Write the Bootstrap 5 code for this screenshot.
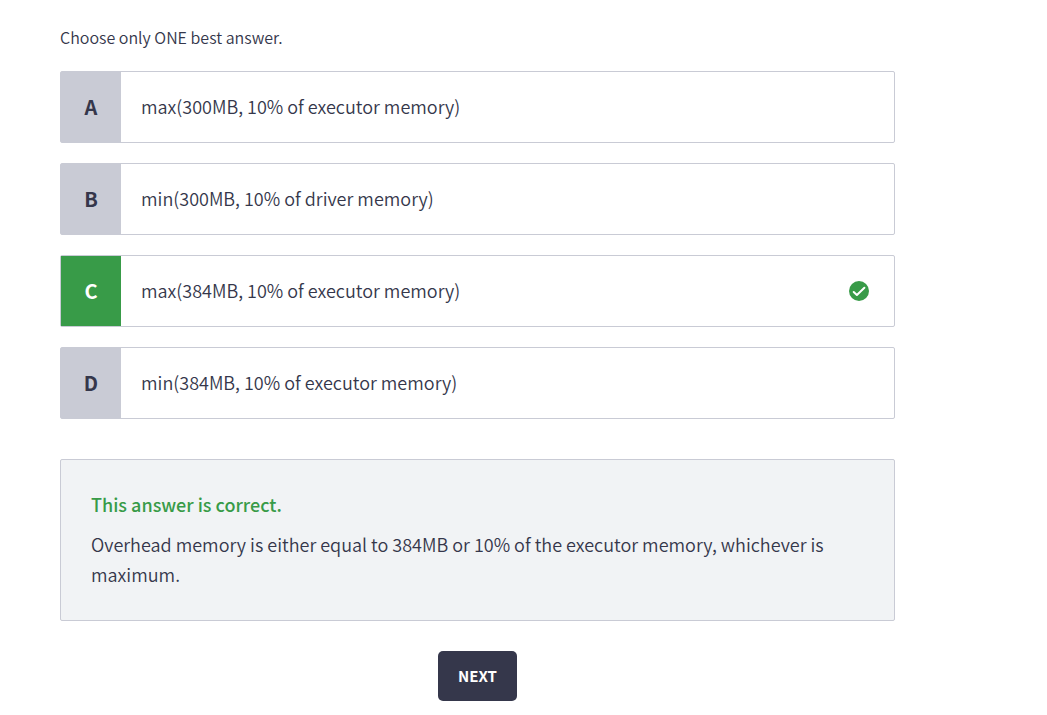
<!DOCTYPE html>
<html lang="en">
<head>
<meta charset="utf-8">
<meta name="viewport" content="width=device-width, initial-scale=1">
<title>Quiz question</title>
<link href="https://cdn.jsdelivr.net/npm/bootstrap@5.3.0/dist/css/bootstrap.min.css" rel="stylesheet">
<style>
  :root { --ink: #35374b; --line: #c9cbd5; --ok: #389b48; }
  body { font-family: "Noto Sans CJK SC", "Noto Sans", sans-serif; font-size: 18px; font-weight: 350; line-height: 30px; color: var(--ink); background: #fff; }
  .quiz { max-width: 955px; padding: 25px 60px 14px; }
  .prompt { font-size: 16px; line-height: 24px; margin-bottom: 22px; }
  .answers { gap: 20px; }
  .answer { min-height: 72px; color: inherit; font-weight: inherit; border: 1px solid var(--line); border-radius: 2px; }
  .answer-key { width: 60px; font-size: 20px; font-weight: 700; background: #c9cbd5; }
  .answer-text { padding: 10px 20px 12px; }
  .answer-mark { margin-right: 25px; }
  .answer.correct .answer-key { background: var(--ok); color: #fff; }
  .feedback { margin-top: 40px; padding: 29px 30px 31px; background: #f1f3f5; border: 1px solid var(--line); border-radius: 2px; }
  .feedback-title { font-size: 18px; line-height: 30px; font-weight: 500; margin-bottom: 10px; color: var(--ok); }
  .btn-next { --bs-btn-color: #fff; --bs-btn-bg: #35374b; --bs-btn-hover-color: #fff; --bs-btn-hover-bg: #26283a; --bs-btn-border-width: 0; --bs-btn-border-radius: 5px; --bs-btn-padding-x: 20px; --bs-btn-padding-y: 10px; --bs-btn-font-size: 15px; --bs-btn-line-height: 30px; --bs-btn-font-weight: 700; margin-top: 30px; }
</style>
</head>
<body>
<main class="quiz">
  <p class="prompt">Choose only ONE best answer.</p>
  <div class="answers d-flex flex-column">
    <button type="button" class="answer d-flex align-items-stretch w-100 p-0 bg-white text-start">
      <span class="answer-key d-flex align-items-center justify-content-center flex-shrink-0 align-self-stretch">A</span>
      <span class="answer-text flex-grow-1 align-self-center">max(300MB, 10% of executor memory)</span>
    </button>
    <button type="button" class="answer d-flex align-items-stretch w-100 p-0 bg-white text-start">
      <span class="answer-key d-flex align-items-center justify-content-center flex-shrink-0 align-self-stretch">B</span>
      <span class="answer-text flex-grow-1 align-self-center">min(300MB, 10% of driver memory)</span>
    </button>
    <button type="button" class="answer correct d-flex align-items-stretch w-100 p-0 bg-white text-start">
      <span class="answer-key d-flex align-items-center justify-content-center flex-shrink-0 align-self-stretch">C</span>
      <span class="answer-text flex-grow-1 align-self-center">max(384MB, 10% of executor memory)</span>
      <svg class="answer-mark align-self-center flex-shrink-0" width="20" height="20" viewBox="0 0 20 20" aria-hidden="true">
        <circle cx="10" cy="10" r="10" fill="#389b48"/>
        <path d="M4.7 11 L7.9 14 L15.4 6.8" fill="none" stroke="#fff" stroke-width="2" stroke-linecap="round" stroke-linejoin="round"/>
      </svg>
    </button>
    <button type="button" class="answer d-flex align-items-stretch w-100 p-0 bg-white text-start">
      <span class="answer-key d-flex align-items-center justify-content-center flex-shrink-0 align-self-stretch">D</span>
      <span class="answer-text flex-grow-1 align-self-center">min(384MB, 10% of executor memory)</span>
    </button>
  </div>
  <section class="feedback">
    <h2 class="feedback-title">This answer is correct.</h2>
    <p class="mb-0">Overhead memory is either equal to 384MB or 10% of the executor memory, whichever is maximum.</p>
  </section>
  <div class="text-center">
    <button type="button" class="btn btn-next">NEXT</button>
  </div>
</main>
<script src="https://cdn.jsdelivr.net/npm/bootstrap@5.3.0/dist/js/bootstrap.bundle.min.js"></script>
</body>
</html>
